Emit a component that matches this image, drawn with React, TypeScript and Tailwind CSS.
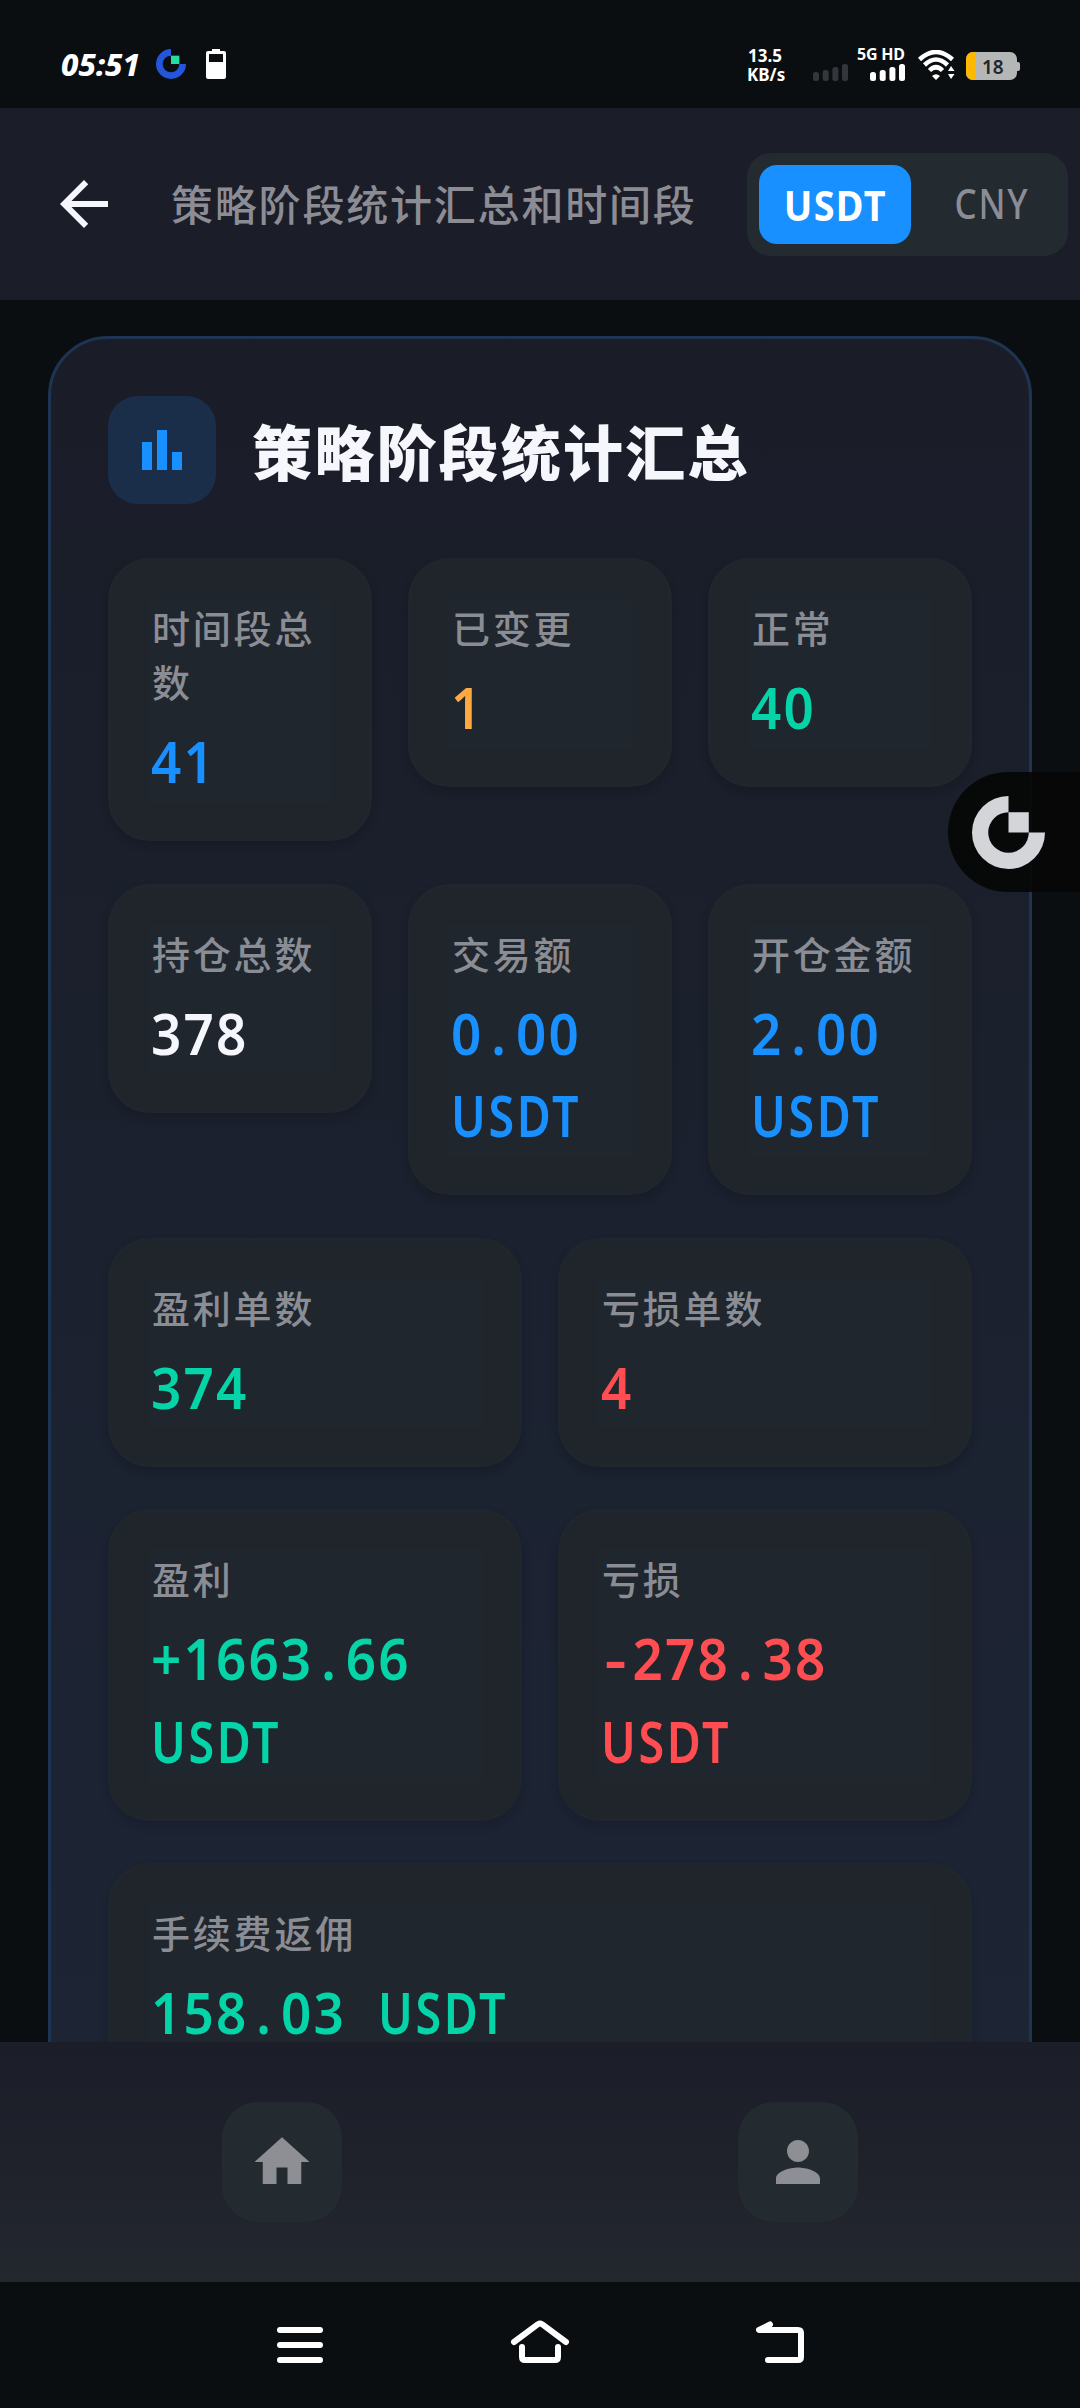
import React from "react";

type Tone = "blue" | "orange" | "green" | "white" | "red";

const toneClass: Record<Tone, string> = {
  blue: "text-[#1890ff]",
  orange: "text-[#ffa940]",
  green: "text-[#04d4a8]",
  white: "text-[#f6f7fd]",
  red: "text-[#ff4d52]",
};

interface Stat {
  label: string;
  value: string;
  unit?: string;
  inlineUnit?: boolean;
  tone: Tone;
}

const rows: Stat[][] = [
  [
    { label: "时间段总数", value: "41", tone: "blue" },
    { label: "已变更", value: "1", tone: "orange" },
    { label: "正常", value: "40", tone: "green" },
  ],
  [
    { label: "持仓总数", value: "378", tone: "white" },
    { label: "交易额", value: "0.00", unit: "USDT", tone: "blue" },
    { label: "开仓金额", value: "2.00", unit: "USDT", tone: "blue" },
  ],
  [
    { label: "盈利单数", value: "374", tone: "green" },
    { label: "亏损单数", value: "4", tone: "red" },
  ],
  [
    { label: "盈利", value: "+1663.66", unit: "USDT", tone: "green" },
    { label: "亏损", value: "-278.38", unit: "USDT", tone: "red" },
  ],
  [{ label: "手续费返佣", value: "158.03", unit: "USDT", inlineUnit: true, tone: "green" }],
];

/* Narrow glyphs get a full digit-wide cell so that figures stay monospaced. */
function Digits({ text }: { text: string }) {
  return (
    <>
      {text.split(/([.\-])/).map((part, i) => {
        if (part === ".") {
          return (
            <span key={i} className="inline-block w-[35px] text-center">
              .
            </span>
          );
        }
        if (part === "-") {
          return (
            <span key={i} className="inline-block w-[34px] scale-x-[1.3] text-center">
              -
            </span>
          );
        }
        return <React.Fragment key={i}>{part}</React.Fragment>;
      })}
    </>
  );
}

function Unit({ text }: { text: string }) {
  return <span className="inline-block w-[139px] origin-left scale-x-[0.88] tracking-[3.2px]">{text}</span>;
}

function StatCard({ stat }: { stat: Stat }) {
  return (
    <div className="min-w-0 flex-1 rounded-[42px] border-[3px] border-[#20272c] bg-[#1f252b] p-[37px] pb-[35.5px] shadow-[0_5px_10px_rgba(8,12,18,0.2)]">
      <div className="bg-[#20262e] px-[3px] pt-[2px]">
        <div className="pl-px text-[38px] leading-[54px] font-medium tracking-[2.8px] text-[#8b8d94]">{stat.label}</div>
        <div
          className={`w-max origin-left scale-x-[0.93] pt-3 font-['Noto_Sans','Open_Sans',sans-serif] text-[57px] leading-[82.5px] font-semibold tracking-[2.3px] whitespace-nowrap ${toneClass[stat.tone]}`}
        >
          <Digits text={stat.value} />
          {stat.unit && stat.inlineUnit && <span className="inline-block w-[34px]">&nbsp;</span>}
          {stat.unit && !stat.inlineUnit && <br />}
          {stat.unit && <Unit text={stat.unit} />}
        </div>
      </div>
    </div>
  );
}

function RingLogo({ size, ring, dot }: { size: number; ring: string; dot: string }) {
  return (
    <svg width={size} height={size} viewBox="0 0 72 72">
      <path d="M36 0A36 36 0 1 0 72 36H56A20 20 0 1 1 36 16Z" fill={ring} />
      <path d="M36 16h20v20H36z" fill={dot} />
    </svg>
  );
}

function Signal({ color }: { color: string }) {
  return (
    <svg width="35" height="17" viewBox="0 0 35 17" fill={color}>
      <rect x="0" y="8" width="6" height="9" rx="2.5" />
      <rect x="9.7" y="6" width="6" height="11" rx="2.5" />
      <rect x="19.4" y="3" width="6" height="14" rx="2.5" />
      <rect x="29" y="0" width="6" height="17" rx="2.5" />
    </svg>
  );
}

function StatusBar() {
  return (
    <div className="flex h-[108px] shrink-0 items-start font-['Noto_Sans',sans-serif] text-white">
      <div className="mt-[43px] ml-[61px] w-[95px] text-[31px] leading-[42px] font-extrabold italic">05:51</div>
      <div className="mt-[49px]">
        <RingLogo size={30} ring="#2456dc" dot="#22dca0" />
      </div>
      <svg className="mt-[49px] ml-5" width="20" height="30" viewBox="0 0 20 30">
        <path d="M6 0h8v2h4a2 2 0 0 1 2 2v24a2 2 0 0 1-2 2H2a2 2 0 0 1-2-2V4a2 2 0 0 1 2-2h4z" fill="#fff" />
        <path d="M3 5h14v8H3z" fill="#0a0e11" />
      </svg>
      <div className="mt-[46px] ml-auto w-[66px] text-[17px] leading-[19px] font-bold">
        <div className="pl-[1px]">13.5</div>
        <div>KB/s</div>
      </div>
      <div className="mt-16">
        <Signal color="#33373b" />
      </div>
      <div className="mt-[45px] ml-[9px] flex w-12 flex-col items-end">
        <div className="h-[19px] w-12 text-[16px] leading-[18px] font-bold tracking-[-0.2px] whitespace-nowrap">5G HD</div>
        <Signal color="#fff" />
      </div>
      <svg className="mt-[50px] ml-[13px]" width="37" height="30" viewBox="0 0 37 30" fill="none" stroke="#fff">
        <path d="M1.500 9.500Q18 -5.500 34.500 9.500" strokeWidth="4.500" />
        <path d="M6.500 15Q18 4 29.500 15" strokeWidth="4.500" />
        <path d="M11.500 20.500Q18 14 24.500 20.500" strokeWidth="4.500" />
        <path d="M14 26Q18 22.500 22 26L18 30Z" fill="#fff" stroke="none" />
        <path d="M30 21L33 16L36.500 21ZM30 24L33 29L36.500 24Z" fill="#fff" stroke="none" />
      </svg>
      <div className="mt-[52px] mr-[60px] ml-[11px] flex items-center">
        <div className="flex h-[28px] w-[51px] items-center overflow-hidden rounded-[7px] bg-[#b5b6b6]">
          <div className="h-full w-[10px] bg-[#ffb800]" />
          <div className="pt-[2px] pl-[6px] text-[19px] leading-none font-semibold text-[#22262a]">18</div>
        </div>
        <div className="h-[9px] w-[3px] rounded-r-[2px] bg-[#b5b6b6]" />
      </div>
    </div>
  );
}

function Header() {
  return (
    <div className="flex h-48 shrink-0 items-center bg-[#1b1d28] pr-3 pl-12">
      <svg width="72" height="72" viewBox="0 0 24 24" fill="#f6f7fd">
        <path d="M20 11H7.830l5.590-5.590L12 4l-8 8 8 8 1.410-1.410L7.830 13H20v-2z" />
      </svg>
      <div className="ml-[51px] pb-[3px] text-[42px] leading-[60px] font-medium tracking-[1.8px] whitespace-nowrap text-[#8b8c94]">
        策略阶段统计汇总和时间段
      </div>
      <div className="ml-auto flex h-[103px] w-[321px] rounded-[24px] bg-[#232a30] p-3 font-['Noto_Sans',sans-serif] text-[41px]">
        <div className="flex h-[79px] w-[152px] items-center justify-center rounded-[18px] bg-[#1890ff] text-[42px] font-bold text-white">
          <span className="scale-x-[0.9] tracking-[1.5px]">USDT</span>
        </div>
        <div className="flex flex-1 items-center justify-center pl-4 font-medium text-[#8b8c94]">
          <span className="scale-x-[0.85] tracking-[2px]">CNY</span>
        </div>
      </div>
    </div>
  );
}

export default function App() {
  return (
    <div className="relative flex h-[2408px] w-[1080px] flex-col overflow-hidden bg-[#0a0e11] font-['Noto_Sans_CJK_SC',sans-serif]">
      <StatusBar />
      <Header />
      <div className="h-[1742px] shrink-0 overflow-hidden px-12 pt-9">
        <div className="h-[2000px] rounded-t-[60px] border-[3px] border-[#1d3552] bg-linear-to-b from-[#1a1d28] to-[#1d2637] px-[57px] pt-[57px]">
          <div className="flex items-center gap-9">
            <div className="flex size-[108px] items-center justify-center rounded-[30px] bg-[#1a2e4a]">
              <svg width="60" height="60" viewBox="0 0 60 60" fill="#1890ff">
                <path d="M10 22h10v28H10zM25 10h10v40H25zM40 32h10v18H40z" />
              </svg>
            </div>
            <div className="text-[60px] leading-[72px] font-black tracking-[2.2px] text-[#f6f7fd]">策略阶段统计汇总</div>
          </div>
          <div className="mt-[54px] flex flex-col gap-[42.5px]">
            {rows.map((row, i) => (
              <div key={i} className="flex items-start gap-9">
                {row.map((stat) => (
                  <StatCard key={stat.label} stat={stat} />
                ))}
              </div>
            ))}
          </div>
        </div>
      </div>
      <div className="flex h-60 shrink-0 items-center justify-around bg-linear-to-b from-[#1b1d28] to-[#23272e] px-6">
        <div className="flex size-[120px] items-center justify-center rounded-[36px] bg-[#232a30]">
          <svg width="66" height="66" viewBox="0 0 24 24" fill="#8e8f95">
            <path d="M10 20v-6h4v6h5v-8h3L12 3 2 12h3v8z" />
          </svg>
        </div>
        <div className="flex size-[120px] items-center justify-center rounded-[36px] bg-[#232a30]">
          <svg width="66" height="66" viewBox="0 0 24 24" fill="#8e8f95">
            <path d="M12 12c2.210 0 4-1.790 4-4s-1.790-4-4-4-4 1.790-4 4 1.790 4 4 4zm0 2c-2.670 0-8 1.340-8 4v2h16v-2c0-2.660-5.330-4-8-4z" />
          </svg>
        </div>
      </div>
      <div className="flex h-[126px] shrink-0 items-center justify-between px-[270px]">
        <svg width="60" height="60" viewBox="0 0 60 60" fill="none" stroke="#fff" strokeWidth="6" strokeLinecap="round">
          <path d="M10 15h40M10 30h40M10 45h40" />
        </svg>
        <svg
          width="60"
          height="60"
          viewBox="0 0 60 60"
          fill="none"
          stroke="#fff"
          strokeWidth="6"
          strokeLinecap="round"
          strokeLinejoin="round"
        >
          <path d="M4 27L28 9.200Q30 8 32 9.200L56 27M12 32v10q0 3 3 3h30q3 0 3-3v-10" />
        </svg>
        <svg
          width="60"
          height="60"
          viewBox="0 0 60 60"
          fill="none"
          stroke="#fff"
          strokeWidth="6"
          strokeLinecap="round"
          strokeLinejoin="round"
        >
          <path d="M20 9.500L9 15h39q3 0 3 3v24q0 3-3 3H18" />
        </svg>
      </div>
      <div className="absolute top-[772px] right-0 flex h-[120px] w-[132px] items-center rounded-l-full bg-[#060706]/90 pl-6">
        <RingLogo size={73} ring="#d3d5d9" dot="#d3d5d9" />
      </div>
    </div>
  );
}
